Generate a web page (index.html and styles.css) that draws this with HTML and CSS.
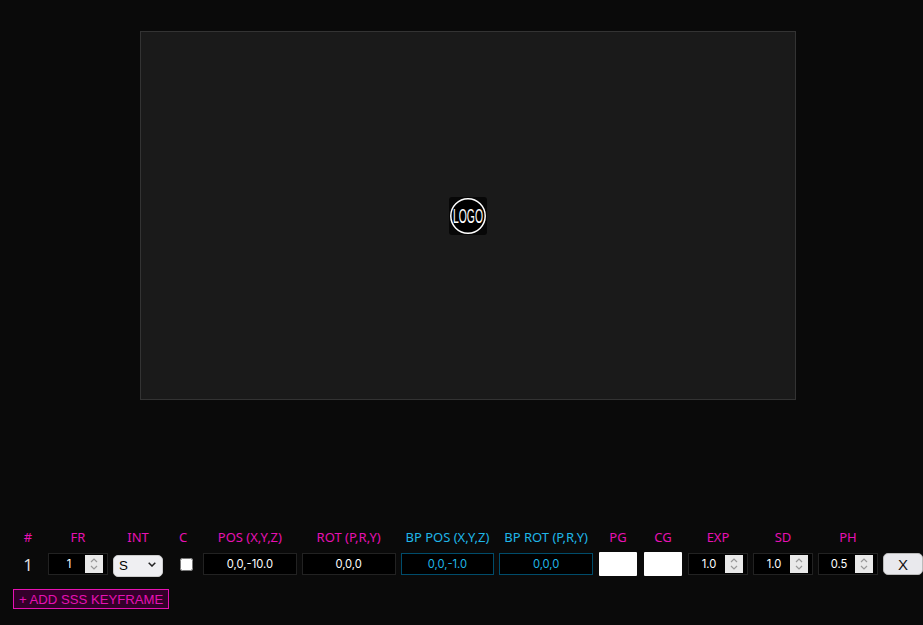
FILE: index.html
```html
<!DOCTYPE html>
<html lang="en">
<head>
    <meta charset="UTF-8">
    <title>SSS Keyframes</title>
    <link rel="stylesheet" href="styles.css">
</head>
<body>
    <div class="stage">
        <div class="preview">
            <svg class="logo" width="38" height="38" viewBox="0 0 38 38">
                <rect width="38" height="38" rx="3" fill="#070707"/>
                <circle cx="19" cy="19" r="17.2" fill="#000" stroke="#fff" stroke-width="1.5"/>
                <text x="19" y="26" text-anchor="middle" textLength="30" lengthAdjust="spacingAndGlyphs" class="logo-text">LOGO</text>
            </svg>
        </div>
    </div>

    <div class="keyframes">
        <div class="row labels">
            <span class="col-num">#</span>
            <span class="col-num-input">FR</span>
            <span class="col-int">INT</span>
            <span class="col-check">C</span>
            <span class="col-wide">POS (X,Y,Z)</span>
            <span class="col-wide">ROT (P,R,Y)</span>
            <span class="col-wide bp">BP POS (X,Y,Z)</span>
            <span class="col-wide bp">BP ROT (P,R,Y)</span>
            <span class="col-color">PG</span>
            <span class="col-color">CG</span>
            <span class="col-num-input">EXP</span>
            <span class="col-num-input">SD</span>
            <span class="col-num-input">PH</span>
            <span class="col-del"></span>
        </div>

        <div class="row fields">
            <span class="col-num index">1</span>
            <div class="col-num-input num">
                <input type="text" value="1">
                <span class="spin"><svg width="8" height="14" viewBox="0 0 8 14"><path d="M1 5 4 2 7 5M1 9 4 12 7 9"/></svg></span>
            </div>
            <div class="col-int select-wrap">
                <select><option>S</option><option>L</option></select>
                <svg class="chevron" width="8" height="5" viewBox="0 0 8 5"><path d="M.7.7 4 4 7.3.7"/></svg>
            </div>
            <span class="col-check"><input type="checkbox"></span>
            <input class="col-wide text-input" type="text" value="0,0,-10.0">
            <input class="col-wide text-input" type="text" value="0,0,0">
            <input class="col-wide text-input bp-input" type="text" value="0,0,-1.0">
            <input class="col-wide text-input bp-input" type="text" value="0,0,0">
            <span class="col-color"><span class="swatch"></span></span>
            <span class="col-color"><span class="swatch"></span></span>
            <div class="col-num-input num">
                <input type="text" value="1.0">
                <span class="spin"><svg width="8" height="14" viewBox="0 0 8 14"><path d="M1 5 4 2 7 5M1 9 4 12 7 9"/></svg></span>
            </div>
            <div class="col-num-input num">
                <input type="text" value="1.0">
                <span class="spin"><svg width="8" height="14" viewBox="0 0 8 14"><path d="M1 5 4 2 7 5M1 9 4 12 7 9"/></svg></span>
            </div>
            <div class="col-num-input num">
                <input type="text" value="0.5">
                <span class="spin"><svg width="8" height="14" viewBox="0 0 8 14"><path d="M1 5 4 2 7 5M1 9 4 12 7 9"/></svg></span>
            </div>
            <button class="col-del del-btn" type="button">X</button>
        </div>

        <button class="add-btn" type="button">+ ADD SSS KEYFRAME</button>
    </div>
</body>
</html>
```

FILE: styles.css
```css
* {
    margin: 0;
    padding: 0;
    box-sizing: border-box;
}

html, body {
    height: 100%;
    overflow: hidden;
}

body {
    width: 936px;
    background: #0a0a0a;
    font-family: "Noto Sans", sans-serif;
    color: #fff;
}

/* Preview area */
.stage {
    height: 400px;
    padding-top: 31px;
    display: flex;
    justify-content: center;
}

.preview {
    width: 656px;
    height: 369px;
    background: #1a1a1a;
    border: 1px solid #333;
    display: flex;
    justify-content: center;
    align-items: center;
}

.logo {
    overflow: visible;
}

.logo-text {
    font-family: "Liberation Sans", sans-serif;
    font-size: 21px;
    fill: #fff;
}

/* Keyframe table */
.keyframes {
    padding: 128px 13px 0;
}

.row {
    display: flex;
    gap: 5px;
}

.labels {
    height: 18px;
    align-items: center;
    font-size: 13px;
    color: #e611b3;
    text-align: center;
    white-space: nowrap;
}

.labels .bp {
    color: #1fb6e8;
}

.fields {
    margin-top: 5px;
    height: 26px;
    align-items: center;
}

.col-num { width: 30px; }
.col-num-input { width: 60px; }
.col-int { width: 50px; }
.col-check { width: 30px; }
.col-wide { width: 93.75px; }
.col-color { width: 40px; }
.col-del { width: 40px; }

.index {
    font-size: 17px;
    text-align: center;
    color: #ddd;
}

.text-input,
.num input {
    font-family: "Inter", sans-serif;
    font-size: 11.2px;
    text-align: center;
    color: #fff;
    background: #000;
}

.text-input {
    height: 22px;
    border: 1px solid #222;
}

.text-input.bp-input {
    border-color: #004c6b;
    color: #1fb6e8;
}

/* Number field with spinner */
.num {
    height: 22px;
    display: flex;
    align-items: center;
    padding-right: 4px;
    background: #000;
    border: 1px solid #222;
}

.num input {
    flex: 1;
    min-width: 0;
    padding-left: 4px;
    border: none;
    outline: none;
}

.spin {
    width: 18px;
    height: 18px;
    background: #e9e9e9;
    display: flex;
    justify-content: center;
    align-items: center;
}

.spin path {
    fill: none;
    stroke: #999;
    stroke-width: 1.2;
}

/* Select */
.select-wrap {
    position: relative;
    height: 22px;
}

.select-wrap select {
    appearance: none;
    width: 100%;
    height: 100%;
    padding-left: 5px;
    font-family: "Liberation Sans", sans-serif;
    font-size: 13.33px;
    color: #000;
    background: #efeff2;
    border: 1px solid #ccc;
    border-radius: 5px;
}

.chevron {
    position: absolute;
    right: 7px;
    top: 9px;
    pointer-events: none;
}

.chevron path {
    fill: none;
    stroke: #222;
    stroke-width: 1.5;
}

.fields .col-check {
    display: flex;
    justify-content: center;
    padding-left: 6px;
}

.col-check input {
    width: 13px;
    height: 13px;
}

.col-color {
    display: flex;
    justify-content: center;
}

.swatch {
    width: 38px;
    height: 24px;
    background: #fff;
    border-radius: 1px;
}

.del-btn {
    height: 22px;
    background: #e9e9ed;
    color: #111;
    border: 1px solid #bbb;
    border-radius: 5px;
    font-family: "Liberation Sans", sans-serif;
    font-size: 15px;
}

.add-btn {
    display: block;
    margin-top: 12px;
    height: 20px;
    padding: 0 5px;
    background: #33002a;
    border: 1px solid #e611b3;
    color: #e611b3;
    font-family: "Liberation Sans", sans-serif;
    font-size: 13.15px;
    white-space: nowrap;
}
```
